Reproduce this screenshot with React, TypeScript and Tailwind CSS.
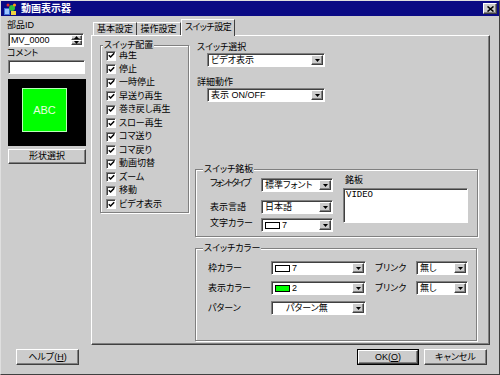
import React from "react";

const sunken =
  "border border-t-[#808080] border-l-[#808080] border-b-white border-r-white shadow-[inset_1px_1px_0_#404040]";
const raised =
  "border border-t-white border-l-white border-r-[#404040] border-b-[#404040] shadow-[inset_-1px_-1px_0_#808080]";
const etched =
  "border border-[#808080] shadow-[inset_1px_1px_0_#fff,1px_1px_0_#fff]";

function DownArrow() {
  return (
    <svg width="5" height="3" viewBox="0 0 5 3">
      <path d="M0 0h5L2.5 3z" fill="#000" />
    </svg>
  );
}

function Select({ className = "", children }: { className?: string; children: React.ReactNode }) {
  return (
    <div className={`${sunken} bg-white h-[14px] flex items-stretch p-[1px] ${className}`}>
      <div className="flex-1 pl-[2px] flex items-center gap-[2px] whitespace-nowrap overflow-hidden leading-none">
        {children}
      </div>
      <div className={`${raised} w-[12px] bg-[#cccccc] flex items-center justify-center`}>
        <DownArrow />
      </div>
    </div>
  );
}

function Chip({ color }: { color: string }) {
  return <span className={`inline-block w-[15px] h-[7px] border border-black ${color}`} />;
}

function Check({ label }: { label: string }) {
  return (
    <div className="h-[13.5px] flex items-center gap-[3px]">
      <div className={`${sunken} w-[10px] h-[10px] bg-white flex items-center justify-center`}>
        <svg width="7" height="7" viewBox="0 0 7 7">
          <path d="M0.8 3.2l1.8 1.8 3.6-3.8" stroke="#000" strokeWidth="1.5" fill="none" />
        </svg>
      </div>
      <span className="leading-none whitespace-nowrap">{label}</span>
    </div>
  );
}

function GroupLabel({ children, className = "" }: { children: React.ReactNode; className?: string }) {
  return (
    <span className={`absolute -top-[6px] bg-[#cccccc] px-[1px] leading-[11px] whitespace-nowrap ${className}`}>
      {children}
    </span>
  );
}

const checks = [
  "再生",
  "停止",
  "一時停止",
  "早送り再生",
  "巻き戻し再生",
  "スロー再生",
  "コマ送り",
  "コマ戻り",
  "動画切替",
  "ズーム",
  "移動",
  "ビデオ表示",
];

export default function App() {
  return (
    <div className="w-[500px] h-[375px] bg-[#cccccc] font-['Liberation_Sans','Noto_Sans_CJK_JP',sans-serif] text-[9px] text-black [font-feature-settings:'palt'] border border-t-[#dfdfdf] border-l-[#dfdfdf] border-r-[#404040] border-b-[#404040] flex flex-col overflow-hidden">
      {/* Title bar */}
      <div className="h-[15px] bg-[#0a0a84] flex items-center pl-[3px] pr-[2px]">
        <svg width="13" height="12" viewBox="0 0 13 12">
          <rect x="0" y="5" width="6" height="7" fill="#3a6fd8" />
          <rect x="1" y="6" width="4" height="5" fill="#9cc4ff" />
          <circle cx="8" cy="5" r="3" fill="#2fbf3a" />
          <circle cx="10.5" cy="2" r="1.6" fill="#ff9a1a" />
          <circle cx="4" cy="2" r="1.5" fill="#e03030" />
          <rect x="7" y="8" width="5" height="4" fill="#f0d040" />
        </svg>
        <span className="ml-[4px] text-white font-bold text-[10px] leading-none">動画表示器</span>
        <div className={`${raised} ml-auto w-[14px] h-[11px] bg-[#cccccc] flex items-center justify-center`}>
          <svg width="7" height="6" viewBox="0 0 7 6">
            <path d="M0.5 0.5l6 5M6.5 0.5l-6 5" stroke="#000" strokeWidth="1.6" />
          </svg>
        </div>
      </div>

      <div className="flex mt-[3px] h-[326px]">
        {/* Left column */}
        <div className="ml-[7px] w-[78px] flex flex-col">
          <div className="h-[12px] leading-[12px] -ml-[1px]">部品ID</div>
          <div className={`${sunken} mt-[2px] w-[76px] h-[14px] bg-white flex items-stretch p-[1px]`}>
            <div className="flex-1 pl-[1px] flex items-center leading-none">MV_0000</div>
            <div className="w-[11px] flex flex-col">
              <div className={`${raised} flex-1 bg-[#cccccc] flex items-center justify-center`}>
                <svg width="5" height="3" viewBox="0 0 5 3">
                  <path d="M0 3h5L2.5 0z" fill="#000" />
                </svg>
              </div>
              <div className={`${raised} flex-1 bg-[#cccccc] flex items-center justify-center`}>
                <DownArrow />
              </div>
            </div>
          </div>
          <div className="h-[12px] leading-[12px] -ml-[1px]">コメント</div>
          <div className={`${sunken} mt-[1px] w-[77px] h-[14px] bg-white`} />
          <div className="mt-[5px] w-[78px] h-[67px] bg-black pl-[14px] pt-[9px]">
            <div className="w-[45px] h-[44px] bg-[#00ff00] border border-[#b8ffb8] flex items-center justify-center">
              <span className="font-['Liberation_Sans',sans-serif] text-[11px] text-[#e8ffe0] leading-none">ABC</span>
            </div>
          </div>
          <div className={`${raised} mt-[3px] w-[78px] h-[15px] flex items-center justify-center leading-none`}>
            形状選択
          </div>
        </div>

        {/* Tabs */}
        <div className="ml-[5px] w-[399px] flex flex-col">
          <div className="h-[16px] flex items-end pl-[2px]">
            <div className="w-[44px] h-[13px] border-t border-l border-t-white border-l-white border-r border-r-[#404040] flex items-center justify-center leading-none">
              基本設定
            </div>
            <div className="w-[44px] h-[13px] border-t border-t-white border-r border-r-[#404040] flex items-center justify-center leading-none">
              操作設定
            </div>
            <div className="relative z-10 -mb-[1px] w-[54px] h-[17px] bg-[#cccccc] border-t border-l border-t-white border-l-white border-r border-r-[#404040] flex items-center justify-center leading-none pb-[2px] tracking-[-0.5px]">
              スイッチ設定
            </div>
          </div>

          <div className={`${raised} h-[310px] flex pl-[8px] pt-[5px]`}>
            {/* スイッチ配置 */}
            <div className={`${etched} relative mt-[4px] w-[89px] h-[168px] pl-[5px] pt-[3px]`}>
              <GroupLabel className="left-[2px]">スイッチ配置</GroupLabel>
              {checks.map((c) => (
                <Check key={c} label={c} />
              ))}
            </div>

            {/* Right column */}
            <div className="ml-[6px] w-[283px] flex flex-col">
              <div className="h-[12px] leading-[12px] pl-[2px]">スイッチ選択</div>
              <Select className="ml-[12px] w-[118px]">ビデオ表示</Select>
              <div className="mt-[9px] h-[12px] leading-[12px] pl-[2px]">詳細動作</div>
              <Select className="ml-[12px] w-[118px]">表示 ON/OFF</Select>

              {/* スイッチ銘板 */}
              <div className={`${etched} relative mt-[67px] w-[283px] h-[68px] flex pt-[8px] pl-[14px]`}>
                <GroupLabel className="left-[7px]">スイッチ銘板</GroupLabel>
                <div className="flex flex-col">
                  <div className="flex items-center">
                    <span className="w-[51px] leading-none whitespace-nowrap tracking-[-2px] -mt-[3px]">フォントタイプ</span>
                    <Select className="w-[72px]">標準フォント</Select>
                  </div>
                  <div className="flex items-center mt-[8px]">
                    <span className="w-[51px] leading-none whitespace-nowrap">表示言語</span>
                    <Select className="w-[72px]">日本語</Select>
                  </div>
                  <div className="flex items-center mt-[4px]">
                    <span className="w-[51px] leading-none whitespace-nowrap -mt-[3px]">文字カラー</span>
                    <Select className="w-[72px]">
                      <Chip color="bg-white" />
                      <span>7</span>
                    </Select>
                  </div>
                </div>
                <div className="ml-[10px] flex flex-col">
                  <div className="h-[10px] leading-[10px] -mt-[3px] pl-[2px]">銘板</div>
                  <div className={`${sunken} mt-[3px] w-[125px] h-[35px] bg-white pl-[2px] pt-[2px] font-['Liberation_Mono',monospace] leading-none`}>
                    VIDEO
                  </div>
                </div>
              </div>

              {/* スイッチカラー */}
              <div className={`${etched} relative mt-[11px] w-[282px] h-[93px] flex flex-col pt-[12px] pl-[12px] gap-[6px]`}>
                <GroupLabel className="left-[7px]">スイッチカラー</GroupLabel>
                <div className="flex items-center">
                  <span className="w-[63px] leading-none whitespace-nowrap">枠カラー</span>
                  <Select className="w-[95px]">
                    <Chip color="bg-white" />
                    <span>7</span>
                  </Select>
                  <span className="ml-[9px] w-[41px] leading-none whitespace-nowrap">ブリンク</span>
                  <Select className="w-[52px]">無し</Select>
                </div>
                <div className="flex items-center">
                  <span className="w-[63px] leading-none whitespace-nowrap">表示カラー</span>
                  <Select className="w-[95px]">
                    <Chip color="bg-[#00ff00]" />
                    <span>2</span>
                  </Select>
                  <span className="ml-[9px] w-[41px] leading-none whitespace-nowrap">ブリンク</span>
                  <Select className="w-[52px]">無し</Select>
                </div>
                <div className="flex items-center">
                  <span className="w-[63px] leading-none whitespace-nowrap">パターン</span>
                  <Select className="w-[95px]">
                    <span className="pl-[11px]">パターン無</span>
                  </Select>
                </div>
              </div>
            </div>
          </div>
        </div>
      </div>

      {/* Bottom buttons */}
      <div className="mt-[4px] h-[16px] flex">
        <div className={`${raised} ml-[15px] w-[63px] h-[16px] flex items-center justify-center leading-none`}>
          <span>
            ヘルプ(<span className="underline">H</span>)
          </span>
        </div>
        <div className="ml-auto mr-[12px] flex gap-[5px]">
          <div className="w-[62px] h-[16px] border border-black">
            <div className={`${raised} h-full flex items-center justify-center leading-none`}>
              <span>
                OK(<span className="underline">O</span>)
              </span>
            </div>
          </div>
          <div className={`${raised} w-[63px] h-[16px] flex items-center justify-center leading-none`}>
            キャンセル
          </div>
        </div>
      </div>
    </div>
  );
}
